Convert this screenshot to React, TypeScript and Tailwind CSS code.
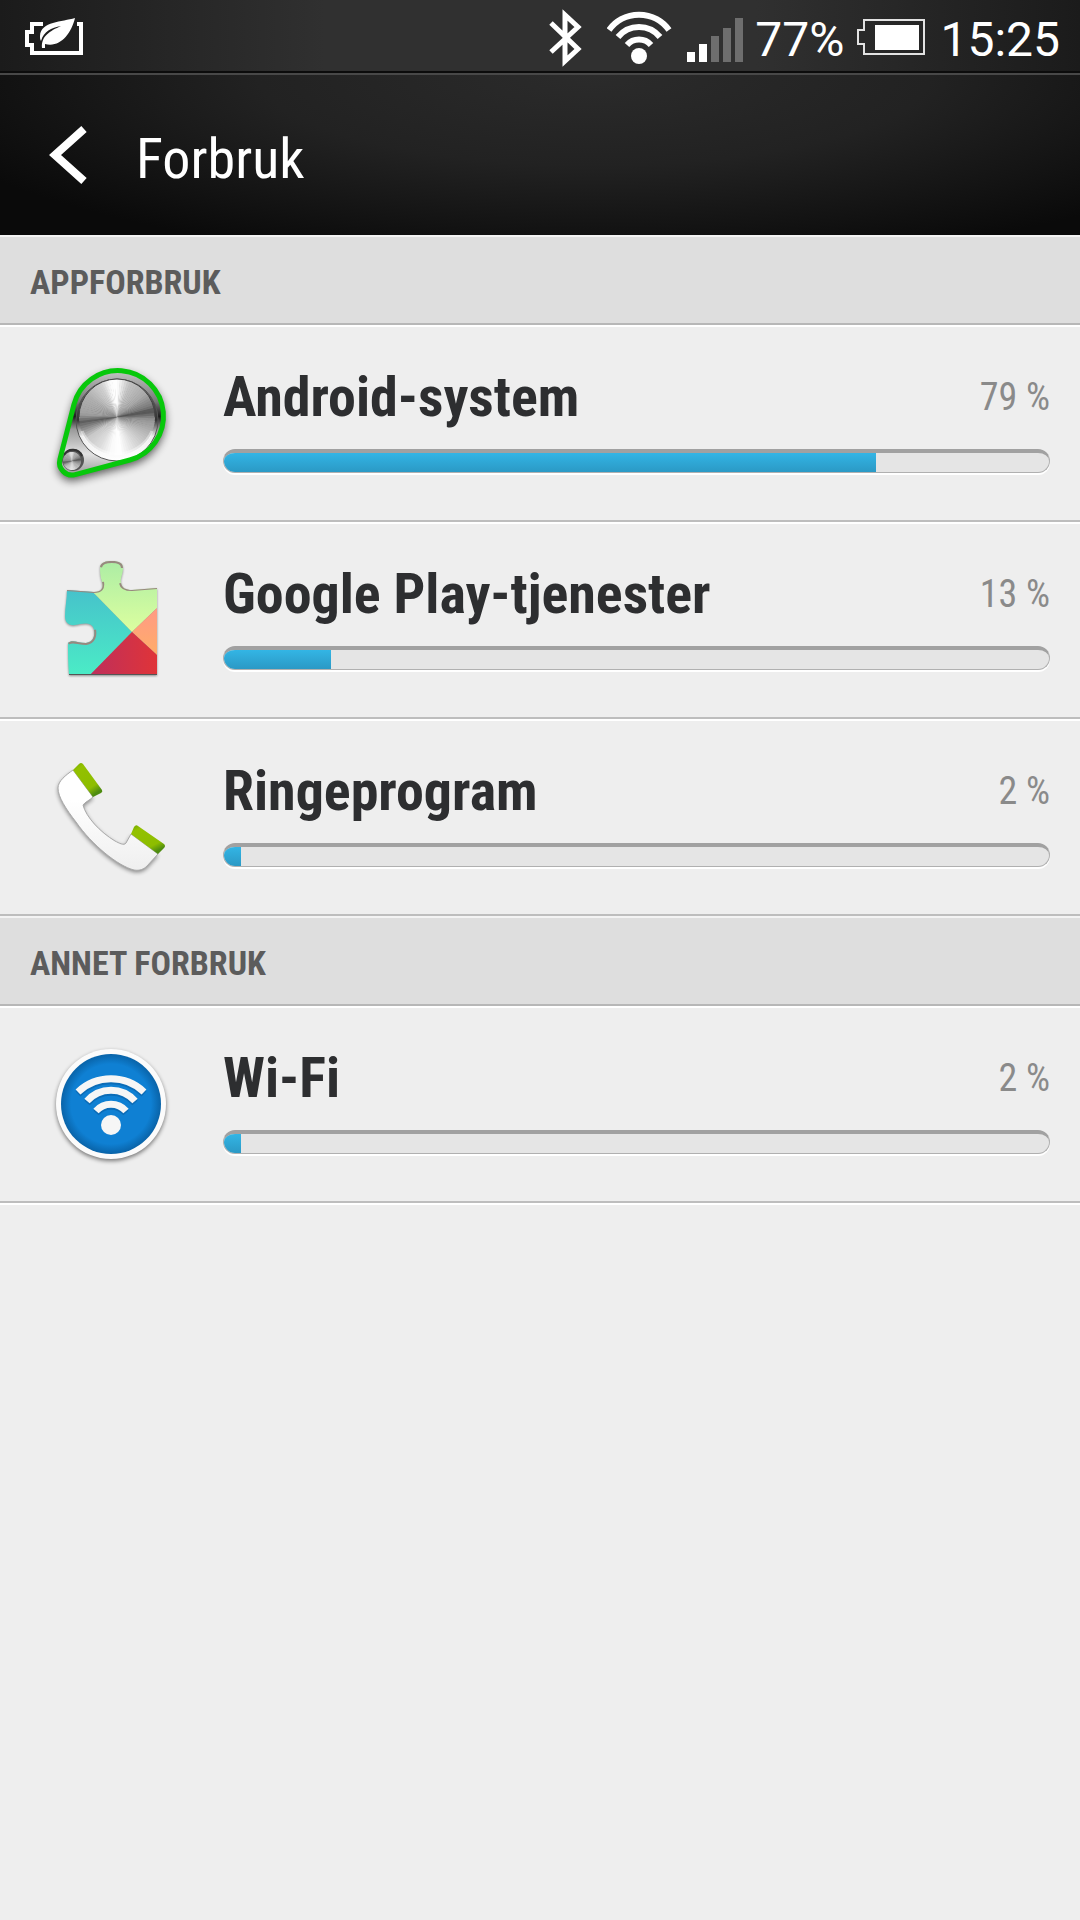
import type { ReactNode } from "react"

type Usage = {
  name: string
  percent: number
  icon: ReactNode
}

// gray levels of the brushed dial, by angle in degrees
const dialStops = [
  [-10, 80], [5, 150], [30, 185], [60, 220], [85, 255], [100, 250], [120, 220], [145, 200], [163, 130],
  [172, 95], [185, 160], [215, 175], [245, 210], [258, 250], [270, 255], [290, 195], [320, 170], [343, 120], [350, 80],
]

function dialShade(angle: number) {
  for (let i = 1; i < dialStops.length; i++) {
    const [a0, v0] = dialStops[i - 1]
    const [a1, v1] = dialStops[i]
    if (angle <= a1) return Math.round(v0 + ((v1 - v0) * (angle - a0)) / (a1 - a0))
  }
  return 80
}

function Dial({ cx, cy, r }: { cx: number; cy: number; r: number }) {
  const wedges = Array.from({ length: 90 }, (_, i) => -10 + i * 4)
  const point = (deg: number) => {
    const rad = (deg * Math.PI) / 180
    return `${(cx + r * Math.cos(rad)).toFixed(2)} ${(cy + r * Math.sin(rad)).toFixed(2)}`
  }
  return (
    <g>
      {wedges.map((a) => {
        const v = dialShade(a + 2)
        return <path key={a} d={`M${cx} ${cy}L${point(a)}L${point(a + 5)}Z`} fill={`rgb(${v},${v},${v})`} />
      })}
    </g>
  )
}

const belt =
  "M33.9 54.7 A45.5 45.5 0 1 1 89.8 110 L35.2 124.6 A12.5 12.5 0 0 1 19.9 109.4 Z"

function AndroidIcon() {
  return (
    <svg viewBox="0 0 140 150" className="w-full" aria-hidden="true">
      <defs>
        <linearGradient id="plate" x1="0" y1="0" x2="0" y2="1">
          <stop offset="0" stopColor="#c4c4c4" />
          <stop offset="0.3" stopColor="#777" />
          <stop offset="0.44" stopColor="#1c1c1c" />
          <stop offset="0.56" stopColor="#999" />
          <stop offset="0.8" stopColor="#e2e2e2" />
          <stop offset="1" stopColor="#999" />
        </linearGradient>
        <linearGradient id="rim" x1="0" y1="0" x2="0" y2="1">
          <stop offset="0" stopColor="#777" />
          <stop offset="0.5" stopColor="#333" />
          <stop offset="0.7" stopColor="#eee" />
          <stop offset="1" stopColor="#fff" />
        </linearGradient>
        <filter id="soft" x="-20%" y="-20%" width="140%" height="140%">
          <feGaussianBlur stdDeviation="4" />
        </filter>
      </defs>
      <path d={belt} fill="#000" stroke="#000" strokeWidth="4" opacity="0.6" transform="translate(0 4)" filter="url(#soft)" />
      <path d={belt} fill="url(#plate)" />
      <circle cx="77" cy="70" r="41" fill="url(#rim)" stroke="#555" strokeWidth="1" />
      <Dial cx={77} cy={67} r={38} />
      <path d="M39 67 A38 38 0 0 1 115 67" fill="none" stroke="#444" strokeWidth="1" />
      <path d="M42 81 A38 38 0 0 0 112 81" fill="none" stroke="#fff" strokeWidth="3" opacity="0.4" />
      <circle cx="33" cy="110" r="11" fill="#555" />
      <Dial cx={32} cy={111} r={9} />
      <path d="M24 105 A10 10 0 0 1 42 106" fill="none" stroke="#333" strokeWidth="2" />
      <path d={belt} fill="none" stroke="#07c80b" strokeWidth="5" />
    </svg>
  )
}

const puzzle =
  "M27 45 L54 47 C61 47 64 43 62 37 C60 31 60 26 60 22 C61 17 66 16 72 16 C79 16 83 18 83 23 C83 29 80 33 81 38 C82 43 86 45 92 45 L117 43 V130 H29 C28 118 28 108 28 98 C32 94 38 98 46 98 C54 97 55 90 54 85 C53 78 46 78 40 79 C30 82 25 79 25 71 C25 62 27 54 27 45 Z"

function PlayServicesIcon() {
  return (
    <svg viewBox="0 2 140 150" className="w-full" aria-hidden="true">
      <defs>
        <clipPath id="puzzle">
          <path d={puzzle} />
        </clipPath>
        <linearGradient id="teal" x1="0" y1="0" x2="0" y2="1">
          <stop offset="0" stopColor="#46c0cb" />
          <stop offset="1" stopColor="#4becc6" />
        </linearGradient>
        <linearGradient id="lime" x1="0" y1="0" x2="0" y2="1">
          <stop offset="0" stopColor="#a8eba5" />
          <stop offset="1" stopColor="#dcff9f" />
        </linearGradient>
        <linearGradient id="red" x1="0" y1="0" x2="1" y2="0">
          <stop offset="0" stopColor="#bd2f5c" />
          <stop offset="1" stopColor="#e03438" />
        </linearGradient>
        <linearGradient id="peach" x1="0" y1="0" x2="0" y2="1">
          <stop offset="0" stopColor="#ff9a86" />
          <stop offset="1" stopColor="#ffad68" />
        </linearGradient>
        <filter id="pieceShadow" x="-10%" y="-10%" width="120%" height="120%">
          <feGaussianBlur stdDeviation="1" />
        </filter>
      </defs>
      <path d={puzzle} fill="#000" opacity="0.4" transform="translate(0 1)" filter="url(#pieceShadow)" />
      <g clipPath="url(#puzzle)">
        <path d="M20 40 H46 L92 87 L49 131 H20 Z" fill="url(#teal)" />
        <path d="M46 40 L55 10 H118 V62 L92 87 Z" fill="url(#lime)" />
        <path d="M118 62 V111 L92 87 Z" fill="url(#peach)" />
        <path d="M92 87 L118 111 V131 H49 Z" fill="url(#red)" />
        <path
          d="M27 44 L54 46 C61 46 63 43 62 37 M60 22 C61 17 66 16 72 16 C79 16 83 18 83 23 M81 38 C82 43 86 44 92 44 L117 42 M28 98 C32 94 38 98 46 98 C54 97 55 90 54 85"
          fill="none"
          stroke="#98887f"
          strokeWidth="4"
        />
        <path d="M28 130 H118" stroke="#555" strokeWidth="2" />
      </g>
    </svg>
  )
}

const handset =
  "M33 25 C26 30 18 36 18 43 C18 52 26 64 36 77 C52 100 78 121 94 125 C100 126 104 124 107 121 L118 109 L91 89 L86 98 C84 101 79 98 75 96 C60 87 46 72 43 60 C45 57 50 55 53 52 Z"

function PhoneIcon() {
  return (
    <svg viewBox="0 -1 140 150" className="w-full" aria-hidden="true">
      <defs>
        <linearGradient id="green" x1="0" y1="0" x2="0.6" y2="1">
          <stop offset="0" stopColor="#6fa600" />
          <stop offset="0.2" stopColor="#93c100" />
          <stop offset="0.8" stopColor="#8dbd00" />
          <stop offset="1" stopColor="#4e8c10" />
        </linearGradient>
        <linearGradient id="shell" x1="0" y1="0" x2="0" y2="1">
          <stop offset="0.3" stopColor="#fff" />
          <stop offset="1" stopColor="#efefef" />
        </linearGradient>
        <filter id="phoneShadow" x="-20%" y="-20%" width="140%" height="140%">
          <feGaussianBlur stdDeviation="2" />
        </filter>
      </defs>
      <path d={handset} fill="#000" opacity="0.45" transform="translate(0 2)" filter="url(#phoneShadow)" />
      <path d={handset} fill="url(#shell)" stroke="#aaa" strokeWidth="1" />
      <path d="M33 25 L39 19 Q41 17 43 19 L62 45 Q63 47 61 48 L53 52 Z" fill="url(#green)" />
      <path d="M91 89 L94 82 Q96 79 98 81 L124 99 Q126 101 124 103 L118 109 Z" fill="url(#green)" />
    </svg>
  )
}

function WifiAppIcon() {
  return (
    <svg viewBox="0 -4 140 150" className="w-full" aria-hidden="true">
      <defs>
        <radialGradient id="blue">
          <stop offset="0.8" stopColor="#0f80d3" />
          <stop offset="1" stopColor="#0963a8" />
        </radialGradient>
        <filter id="discShadow" x="-20%" y="-20%" width="140%" height="140%">
          <feGaussianBlur stdDeviation="2" />
        </filter>
      </defs>
      <circle cx="71" cy="71" r="55" fill="#000" opacity="0.5" filter="url(#discShadow)" />
      <circle cx="71" cy="69" r="55" fill="#fbfbfb" />
      <circle cx="71" cy="69" r="50" fill="url(#blue)" />
      <g fill="none" stroke="#0a5fa5" strokeWidth="7" transform="translate(0 2)" opacity="0.6">
        <path d="M38 57 A48 48 0 0 1 104 57" />
        <path d="M47 66 A32 32 0 0 1 95 66" />
        <path d="M56 76 A20 20 0 0 1 86 76" />
      </g>
      <g fill="none" stroke="#f6f6f6" strokeWidth="7">
        <path d="M38 57 A48 48 0 0 1 104 57" />
        <path d="M47 66 A32 32 0 0 1 95 66" />
        <path d="M56 76 A20 20 0 0 1 86 76" />
      </g>
      <circle cx="71" cy="90" r="10" fill="#f6f6f6" />
    </svg>
  )
}

function StatusBar() {
  return (
    <div className="flex h-[75px] items-start justify-between border-b-2 border-[#484848] bg-[linear-gradient(90deg,#1b1b1b,#303030_30%,#303030_70%,#1b1b1b)] pl-6 pr-5 text-white shadow-[inset_0_-2px_0_#0c0c0c]">
      <svg width="62" height="71" viewBox="24 0 62 71" aria-label="Strømsparing">
        <path d="M43 24 H32 V32 H27 V45 H32 V53 H81 V24 H77" fill="none" stroke="#fff" strokeWidth="4" />
        <path
          d="M75 18 C62 22 41 21 40 36 C40 38 40 39 41 41 C44 31 51 28 61 26 C50 31 41 36 42 48 H45 V44 C60 48 71 34 75 18 Z"
          fill="#fff"
        />
      </svg>
      <div className="flex gap-3">
        <svg width="46" height="71" viewBox="29 0 46 71" aria-label="Bluetooth">
          <path d="M31 23 L58 49 L45 61 V15 L58 27 L31 52" fill="none" stroke="#fff" strokeWidth="5" strokeMiterlimit="10" />
        </svg>
        <svg width="68" height="71" viewBox="87 0 68 71" aria-label="Wi-Fi">
          <g fill="none" stroke="#fff" strokeWidth="6">
            <path d="M89 30 A37 37 0 0 1 149 30" />
            <path d="M98 37 A27 27 0 0 1 140 37" />
            <path d="M107 45 A16 16 0 0 1 131 45" />
          </g>
          <circle cx="119" cy="56" r="8" fill="#fff" />
        </svg>
        <svg width="56" height="71" viewBox="167 0 56 71" aria-label="Signal">
          <path d="M167 52h8v10h-8zM179 44h8v18h-8z" fill="#fff" />
          <path d="M191 36h8v26h-8zM203 28h8v34h-8zM215 18h8v44h-8z" fill="#6e6e6e" />
        </svg>
        <span className="pt-2 text-5xl leading-[63px]">77%</span>
        <svg width="72" height="71" viewBox="57 0 72 71" aria-label="Batteri">
          <path d="M65 20 H125 V54 H65 V44 H59 V30 H65 Z" fill="none" stroke="#e2e2e2" strokeWidth="2" />
          <path d="M76 25h44v25h-44z" fill="#fff" />
        </svg>
        <span className="pt-2 text-5xl leading-[63px]">15:25</span>
      </div>
    </div>
  )
}

function SectionTitle({ children }: { children: ReactNode }) {
  return (
    <h2 className="border-b-2 border-t-2 border-b-[#b7b7b7] border-t-[#f3f3f3] bg-[#dedede] px-[30px] pb-5 pt-6 text-[34px] font-bold leading-[42px] text-[#5c5c5c]">
      {children}
    </h2>
  )
}

function UsageRow({ item }: { item: Usage }) {
  return (
    <li className="flex border-b-2 border-t-2 border-b-[#bdbdbd] border-t-white pb-[45px] pl-10 pr-[30px]">
      <div className="mt-[23px] h-[125px] w-[140px] shrink-0">{item.icon}</div>
      <div className="ml-[43px] mt-[34px] flex-1">
        <div className="flex justify-between leading-[72px]">
          <span className="text-[56px] font-bold text-[#2d2e30]">{item.name}</span>
          <span className="text-[38px] text-[#8a8a8a]">{item.percent} %</span>
        </div>
        <div
          role="progressbar"
          aria-label={item.name}
          aria-valuenow={item.percent}
          className="mt-4 h-6 overflow-hidden rounded-full border border-t-4 border-[#b0b0b0] border-t-[#a1a1a1] bg-[#e5e5e5] shadow-[0_2px_0_#fff]"
        >
          <div className="h-full bg-linear-to-b from-[#33b5e5] to-[#2b99c5]" style={{ width: `${item.percent}%` }} />
        </div>
      </div>
    </li>
  )
}

const appUsage: Usage[] = [
  { name: "Android-system", percent: 79, icon: <AndroidIcon /> },
  { name: "Google Play-tjenester", percent: 13, icon: <PlayServicesIcon /> },
  { name: "Ringeprogram", percent: 2, icon: <PhoneIcon /> },
]

const otherUsage: Usage[] = [{ name: "Wi-Fi", percent: 2, icon: <WifiAppIcon /> }]

export default function App() {
  return (
    <div className="min-h-screen border-b-2 border-transparent bg-[#eeeeee] font-['Roboto',sans-serif]">
      <StatusBar />
      <div className="font-['Roboto_Condensed','Liberation_Sans_Narrow',Roboto,sans-serif]">
        <header className="flex h-40 items-center bg-[radial-gradient(ellipse_at_55%_0%,#2b2b2b,#222222_40%,#0a0a0a_85%)] pl-12 pt-2 text-white">
          <button type="button" aria-label="Tilbake" className="mb-2 mr-12">
            <svg width="40" height="60" viewBox="0 0 40 60">
              <path d="M36 4 L7 30 L36 56" fill="none" stroke="#fff" strokeWidth="8" />
            </svg>
          </button>
          <h1 className="text-[56px] leading-[72px]">Forbruk</h1>
        </header>
        <main>
          <SectionTitle>APPFORBRUK</SectionTitle>
          <ul>
            {appUsage.map((item) => (
              <UsageRow key={item.name} item={item} />
            ))}
          </ul>
          <SectionTitle>ANNET FORBRUK</SectionTitle>
          <ul className="shadow-[0_2px_0_#fff]">
            {otherUsage.map((item) => (
              <UsageRow key={item.name} item={item} />
            ))}
          </ul>
        </main>
      </div>
    </div>
  )
}
